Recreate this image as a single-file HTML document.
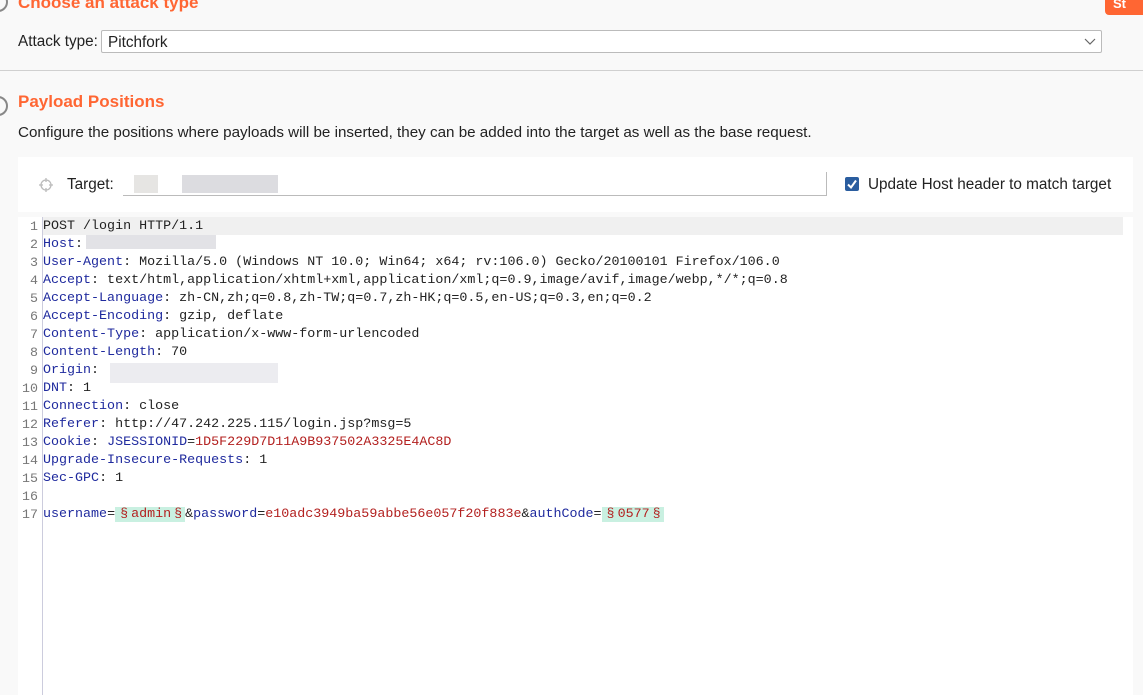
<!DOCTYPE html>
<html><head><meta charset="utf-8"><style>
body{margin:0;width:1143px;height:695px;background:#f9f9f9;font-family:"Liberation Sans","Noto Sans CJK SC",sans-serif;position:relative;overflow:hidden;color:#222}
.abs{position:absolute}
h2{margin:0;color:#ff6633;font-size:17px;font-weight:bold;position:absolute}
.circ{position:absolute;left:-12px;width:16px;height:16px;border:2px solid #888;border-radius:50%}
.code{position:absolute;left:18px;top:217px;width:1115px;height:478px;background:#fff}
.ln{position:absolute;left:0;width:20px;text-align:right;color:#777}
.row{position:absolute;left:25px;white-space:pre;font-family:"Liberation Mono","Noto Sans CJK SC",monospace;font-size:13.35px;line-height:18px;height:18px;top:1px}
.ln{font-family:"Liberation Mono",monospace;font-size:13.3px;line-height:18px}
.k{color:#1f2a9e}.r{color:#b3201f}
.m{background:#c9f0e1;color:#b3201f;padding-left:2px}
.s{display:inline-block;width:14px;text-align:center}
.blur{position:absolute;background:#e2e2e6}
</style></head><body>
<div class="circ" style="top:-8px"></div>
<h2 style="left:18px;top:-7px">Choose an attack type</h2>
<div class="abs" style="right:0;top:-6px;width:30px;height:21px;background:#ff6633;border-radius:4px 0 0 4px;color:#fff;font-weight:bold;font-size:13px;padding-left:8px;line-height:20px">St</div>
<div class="abs" style="left:18px;top:33px;font-size:15.3px">Attack type:</div>
<div class="abs" style="left:101px;top:30px;height:23px;background:#fff;border:1px solid #bbb;border-radius:2px;font-size:15.3px;line-height:23px;padding-left:6px;box-sizing:border-box;width:1001px">Pitchfork</div>
<svg class="abs" style="left:1084px;top:38px" width="12" height="8"><path d="M1 1 L6 6 L11 1" fill="none" stroke="#666" stroke-width="1.2"/></svg>
<div class="abs" style="left:0;top:70px;width:1143px;height:1px;background:#d0d0d0"></div>
<div class="circ" style="top:96px"></div>
<h2 style="left:18px;top:92px">Payload Positions</h2>
<div class="abs" style="left:18px;top:124px;font-size:15.2px">Configure the positions where payloads will be inserted, they can be added into the target as well as the base request.</div>
<div class="abs" style="left:18px;top:157px;width:1115px;height:55px;background:#fff"></div>
<svg class="abs" style="left:38px;top:177px" width="16" height="16"><circle cx="8" cy="8" r="5" fill="none" stroke="#bbb" stroke-width="1.3"/><path d="M8 1v4M8 11v4M1 8h4M11 8h4" stroke="#bbb" stroke-width="1.3"/></svg>
<div class="abs" style="left:67px;top:176px;font-size:15.3px">Target:</div>
<div class="abs" style="left:123px;top:172px;width:703px;height:23px;border:1px solid #bbb;border-width:0 1px 1px 0;background:#fff"></div>
<div class="blur" style="left:134px;top:175px;width:24px;height:18px;background:#e6e5e3"></div>
<div class="blur" style="left:182px;top:175px;width:96px;height:18px;background:#dcdce0"></div>
<div class="abs" style="left:845px;top:177px;width:14px;height:14px;background:#2a5d9f;border-radius:2px"></div>
<svg class="abs" style="left:845px;top:177px" width="14" height="14"><path d="M3 7.5 L6 10.5 L11 3.5" fill="none" stroke="#fff" stroke-width="2"/></svg>
<div class="abs" style="left:868px;top:176px;font-size:15.3px">Update Host header to match target</div>
<div class="code">
<div class="abs" style="left:24px;top:0;width:1px;height:478px;background:#ccd"></div>
<div class="abs" style="left:25px;top:0;width:1080px;height:18px;background:#f0f0f0"></div>
<div class="ln" style="top:1px">1</div><div class="row" style="top:1px">POST /login HTTP/1.1</div>
<div class="ln" style="top:19px">2</div><div class="row" style="top:19px"><span class="k">Host</span>:</div>
<div class="blur" style="left:68px;top:18px;width:130px;height:14px"></div>
<div class="ln" style="top:37px">3</div><div class="row" style="top:37px"><span class="k">User-Agent</span>: Mozilla/5.0 (Windows NT 10.0; Win64; x64; rv:106.0) Gecko/20100101 Firefox/106.0</div>
<div class="ln" style="top:55px">4</div><div class="row" style="top:55px"><span class="k">Accept</span>: text/html,application/xhtml+xml,application/xml;q=0.9,image/avif,image/webp,*/*;q=0.8</div>
<div class="ln" style="top:73px">5</div><div class="row" style="top:73px"><span class="k">Accept-Language</span>: zh-CN,zh;q=0.8,zh-TW;q=0.7,zh-HK;q=0.5,en-US;q=0.3,en;q=0.2</div>
<div class="ln" style="top:91px">6</div><div class="row" style="top:91px"><span class="k">Accept-Encoding</span>: gzip, deflate</div>
<div class="ln" style="top:109px">7</div><div class="row" style="top:109px"><span class="k">Content-Type</span>: application/x-www-form-urlencoded</div>
<div class="ln" style="top:127px">8</div><div class="row" style="top:127px"><span class="k">Content-Length</span>: 70</div>
<div class="ln" style="top:145px">9</div><div class="row" style="top:145px"><span class="k">Origin</span>:</div>
<div class="blur" style="left:92px;top:146px;width:168px;height:20px;background:#ececf0"></div>
<div class="ln" style="top:163px">10</div><div class="row" style="top:163px"><span class="k">DNT</span>: 1</div>
<div class="ln" style="top:181px">11</div><div class="row" style="top:181px"><span class="k">Connection</span>: close</div>
<div class="ln" style="top:199px">12</div><div class="row" style="top:199px"><span class="k">Referer</span>: http://47.242.225.115/login.jsp?msg=5</div>
<div class="ln" style="top:217px">13</div><div class="row" style="top:217px"><span class="k">Cookie</span>: <span class="k">JSESSIONID</span>=<span class="r">1D5F229D7D11A9B937502A3325E4AC8D</span></div>
<div class="ln" style="top:235px">14</div><div class="row" style="top:235px"><span class="k">Upgrade-Insecure-Requests</span>: 1</div>
<div class="ln" style="top:253px">15</div><div class="row" style="top:253px"><span class="k">Sec-GPC</span>: 1</div>
<div class="ln" style="top:271px">16</div>
<div class="ln" style="top:289px">17</div><div class="row" style="top:289px"><span class="k">username</span>=<span class="m"><span class="s">§</span>admin<span class="s">§</span></span>&amp;<span class="k">password</span>=<span class="r">e10adc3949ba59abbe56e057f20f883e</span>&amp;<span class="k">authCode</span>=<span class="m"><span class="s">§</span>0577<span class="s">§</span></span></div>
</div>
</body></html>
